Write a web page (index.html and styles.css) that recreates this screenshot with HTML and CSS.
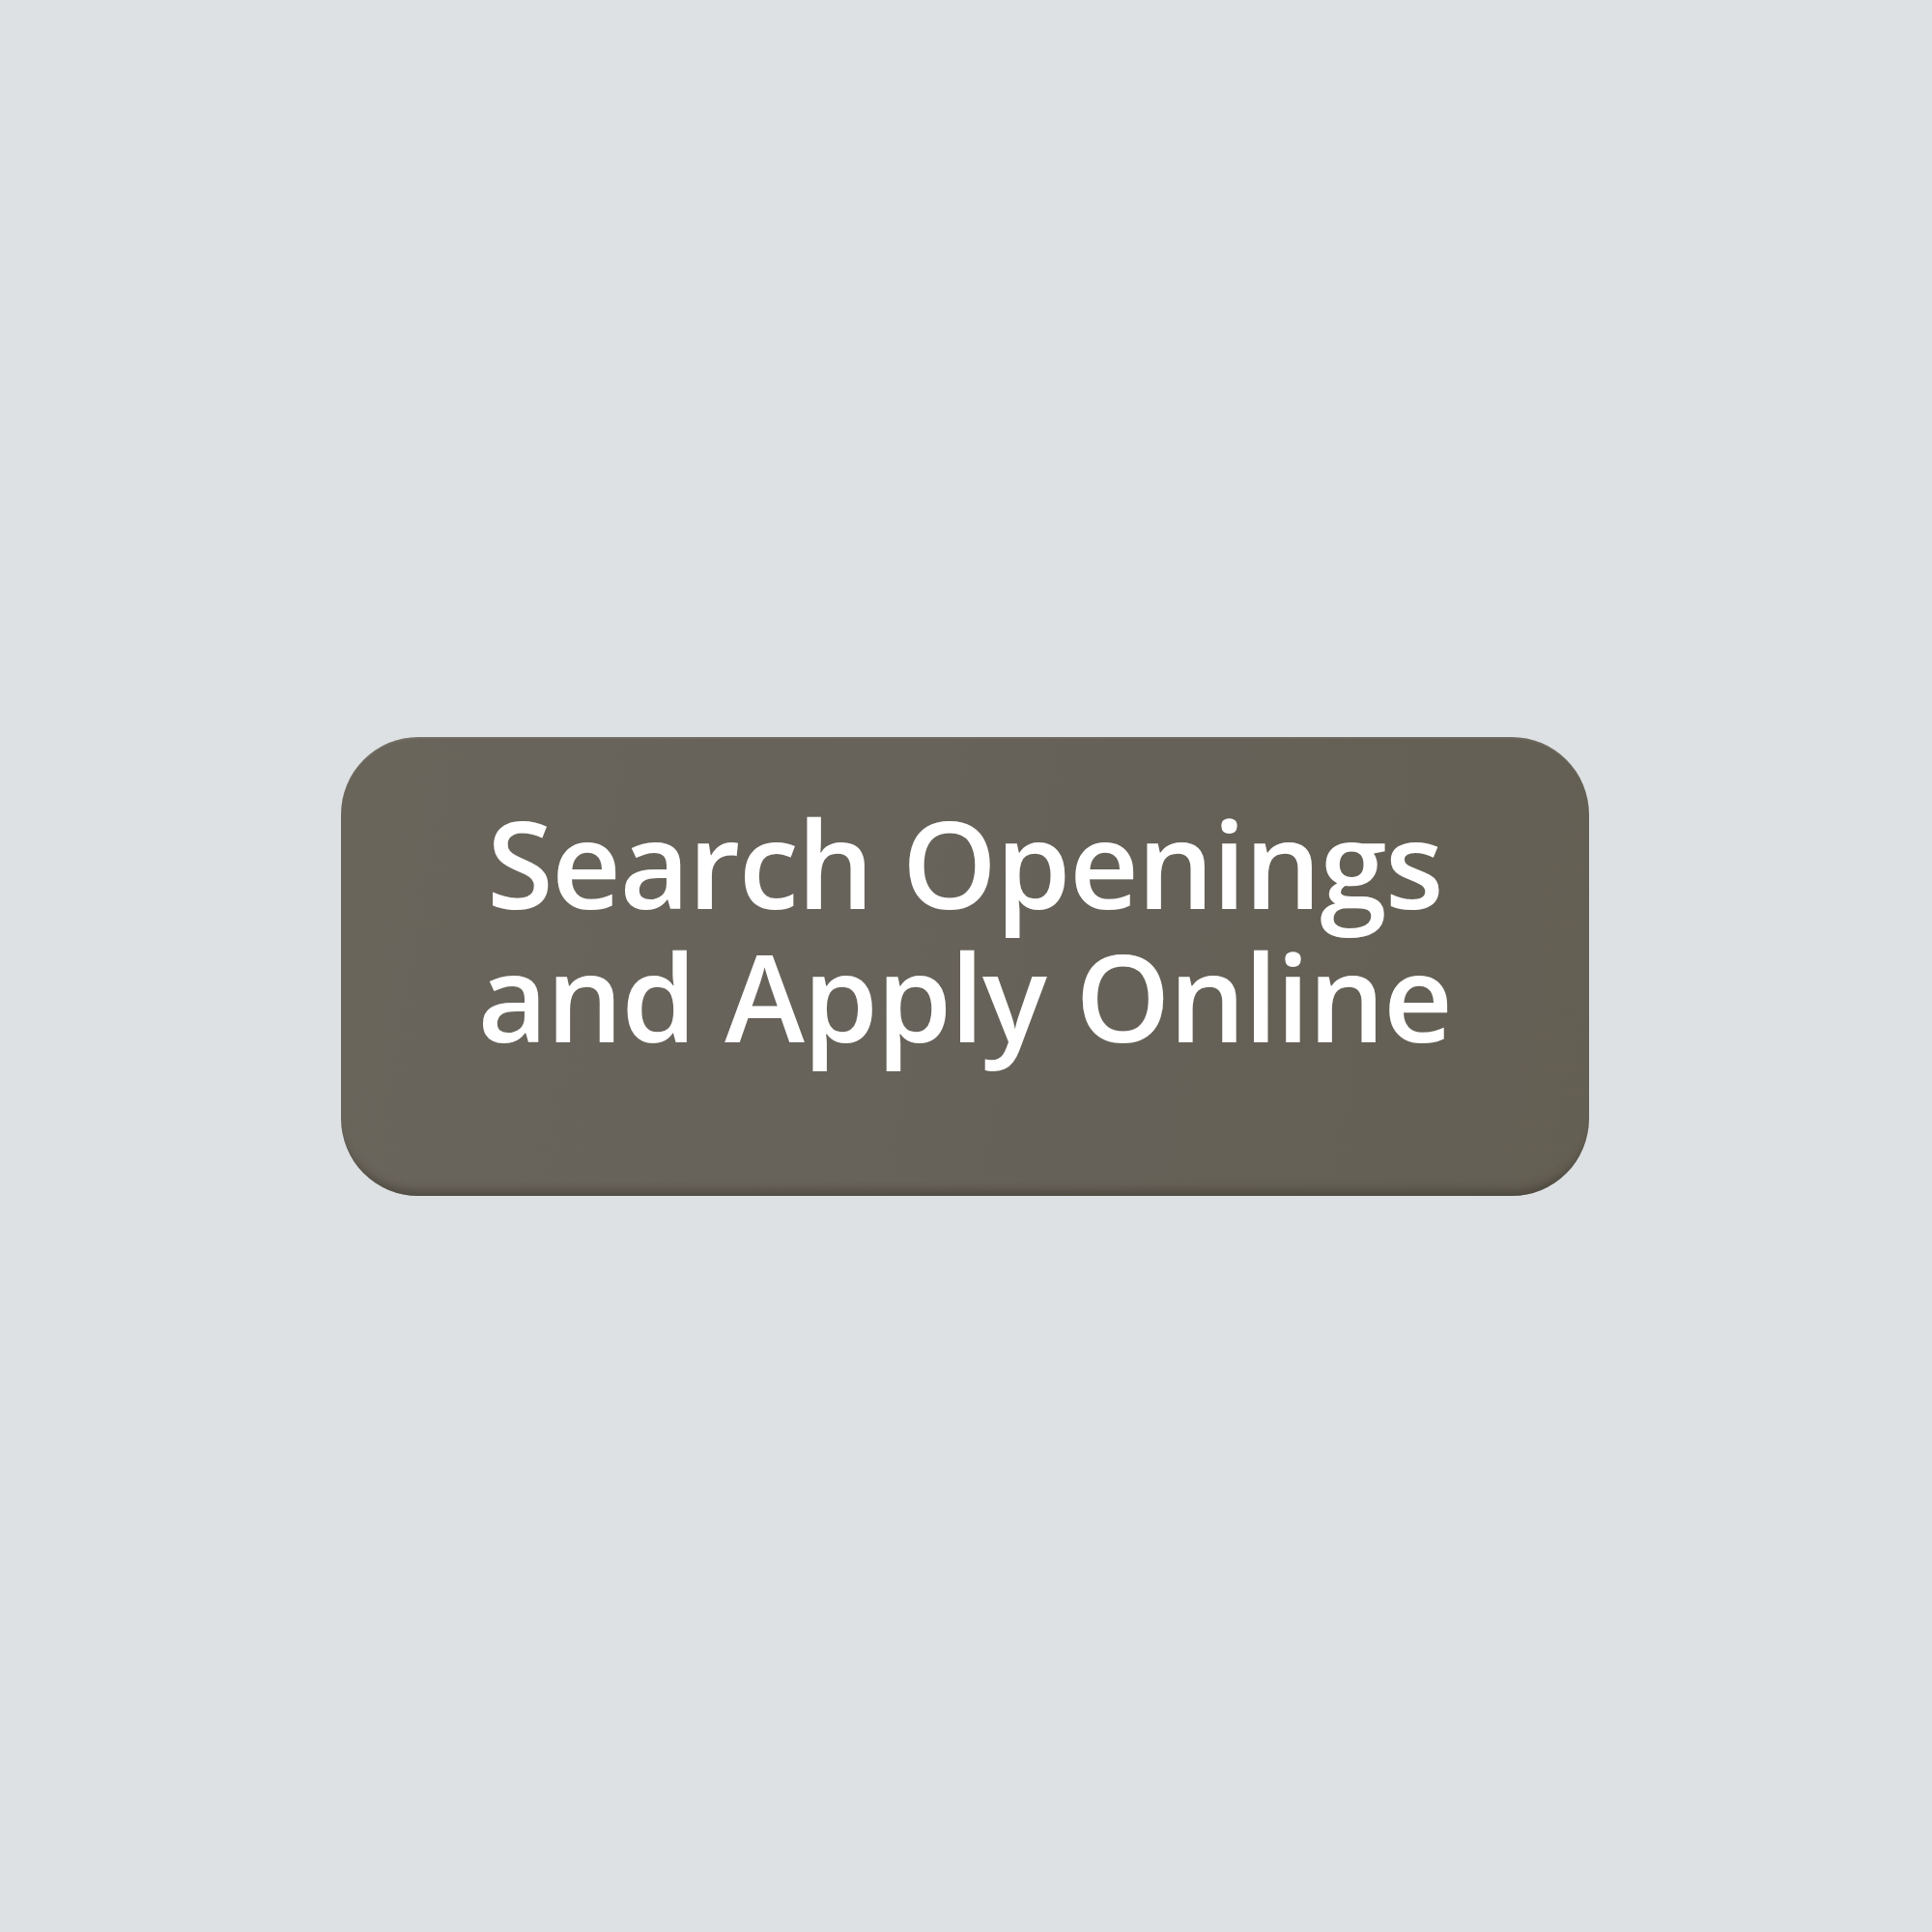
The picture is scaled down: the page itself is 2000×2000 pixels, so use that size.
FILE: index.html
```html
<!DOCTYPE html>
<html lang="en">
<head>
<meta charset="utf-8">
<title>Search Openings and Apply Online</title>
<link rel="stylesheet" href="styles.css">
</head>
<body>
<main class="stage">
  <a class="cta" href="#"><span class="cta-label">Search Openings<br>and Apply Online</span></a>
</main>
</body>
</html>
```

FILE: styles.css
```css
html, body {
  margin: 0;
  padding: 0;
}
body {
  background: #dde1e4;
  font-family: "Open Sans", "Noto Sans", sans-serif;
}
.stage {
  width: 2000px;
  height: 2000px;
  display: flex;
  align-items: center;
  justify-content: center;
}
.cta {
  box-sizing: border-box;
  width: 1292px;
  height: 475px;
  margin-left: -3px;
  border-radius: 80px;
  background: linear-gradient(100deg, #6a655b 0%, #67625a 45%, #645f53 100%);
  box-shadow: inset 0 -14px 8px -8px rgba(40, 36, 28, 0.35), inset 0 2px 1px rgba(255, 255, 255, 0.06);
  display: flex;
  flex-direction: column;
  align-items: center;
  padding-top: 61px;
  color: #ffffff;
  text-decoration: none;
}
.cta-label {
  display: block;
  text-align: center;
  white-space: nowrap;
  font-weight: 650;
  font-size: 125px;
  line-height: 138px;
  letter-spacing: -1.6px;
}
```
